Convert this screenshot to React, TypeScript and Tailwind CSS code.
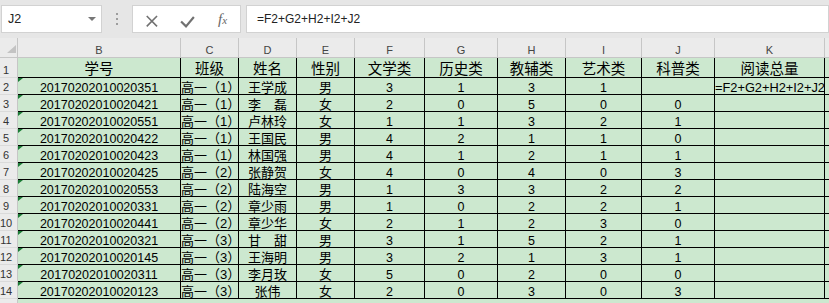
import React from "react";

type Col = { letter: string; w: string; align: string };

const cols: Col[] = [
  { letter: "B", w: "w-[163px]", align: "justify-center" },
  { letter: "C", w: "w-[58px]", align: "justify-start" },
  { letter: "D", w: "w-[58px]", align: "justify-center" },
  { letter: "E", w: "w-[58px]", align: "justify-center" },
  { letter: "F", w: "w-[70px]", align: "justify-center" },
  { letter: "G", w: "w-[73px]", align: "justify-center" },
  { letter: "H", w: "w-[68px]", align: "justify-center" },
  { letter: "I", w: "w-[76px]", align: "justify-center" },
  { letter: "J", w: "w-[73px]", align: "justify-center" },
  { letter: "K", w: "w-[110px]", align: "justify-start" },
];

const headers = ["学号", "班级", "姓名", "性别", "文学类", "历史类", "教辅类", "艺术类", "科普类", "阅读总量"];

const data: string[][] = [
  ["20170202010020351", "高一（1）", "王学成", "男", "3", "1", "3", "1", "", "=F2+G2+H2+I2+J2"],
  ["20170202010020421", "高一（1）", "李　磊", "女", "2", "0", "5", "0", "0", ""],
  ["20170202010020551", "高一（1）", "卢林玲", "女", "1", "1", "3", "2", "1", ""],
  ["20170202010020422", "高一（1）", "王国民", "男", "4", "2", "1", "1", "0", ""],
  ["20170202010020423", "高一（1）", "林国强", "男", "4", "1", "2", "1", "1", ""],
  ["20170202010020425", "高一（2）", "张静贺", "女", "4", "0", "4", "0", "3", ""],
  ["20170202010020553", "高一（2）", "陆海空", "男", "1", "3", "3", "2", "2", ""],
  ["20170202010020331", "高一（2）", "章少雨", "男", "1", "0", "2", "2", "1", ""],
  ["20170202010020441", "高一（2）", "章少华", "女", "2", "1", "2", "3", "0", ""],
  ["20170202010020321", "高一（3）", "甘　甜", "男", "3", "1", "5", "2", "1", ""],
  ["20170202010020145", "高一（3）", "王海明", "男", "3", "2", "1", "3", "1", ""],
  ["20170202010020311", "高一（3）", "李月玫", "女", "5", "0", "2", "0", "0", ""],
  ["20170202010020123", "高一（3）", "张伟", "女", "2", "0", "3", "0", "3", ""],
];

function RowHeader({ n, h }: { n: string; h: string }) {
  return (
    <div className={`${h} w-[18px] shrink-0 bg-[#ebebeb] border-r border-b border-r-[#c6c6c6] border-b-[#dadada] flex items-end`}>
      <span className="w-[12px] text-center text-[11px] leading-[12px] text-[#333] pb-[1px]">{n}</span>
    </div>
  );
}

export default function App() {
  return (
    <div className="w-[829px] h-[303px] overflow-hidden bg-[#e6e6e6] font-['Liberation_Sans','Noto_Sans_CJK_SC',sans-serif] text-black">
      {/* toolbar */}
      <div className="h-[38px] flex items-start pt-[5px]">
        <div className="ml-[1px] w-[101px] h-[28px] bg-white border border-[#d2d2d2] flex items-center pl-[6px] pr-[5px]">
          <span className="text-[12.5px] text-[#222] flex-1">J2</span>
          <div className="w-0 h-0 border-l-[4px] border-r-[4px] border-t-[4px] border-l-transparent border-r-transparent border-t-[#777] mt-[-1px]" />
        </div>
        <div className="w-[30px] h-[28px] flex flex-col items-center justify-center gap-[3px]">
          <div className="w-[2px] h-[2px] bg-[#9d9d9d]" />
          <div className="w-[2px] h-[2px] bg-[#9d9d9d]" />
          <div className="w-[2px] h-[2px] bg-[#9d9d9d]" />
        </div>
        <div className="w-[109px] h-[28px] bg-white border border-[#d2d2d2] flex items-center">
          <svg width="109" height="26" viewBox="0 0 109 26" className="block">
            <path d="M14 10 L24.5 20.5 M24.5 10 L14 20.5" stroke="#717171" strokeWidth="1.6" fill="none" />
            <path d="M49 15.5 L54 20.5 L62 11" stroke="#717171" strokeWidth="2.2" fill="none" />
          </svg>
        </div>
        <div className="ml-[-23px] w-[20px] h-[28px] flex items-center mr-[8px] relative">
          <span className="font-['Liberation_Serif',serif] italic text-[15px] text-[#666] leading-none">f</span>
          <span className="font-['Liberation_Serif',serif] italic text-[11px] text-[#666] leading-none mt-[3px]">x</span>
        </div>
        <div className="flex-1 h-[28px] bg-white border border-[#d2d2d2] flex items-center pl-[10px]">
          <span className="text-[12px] text-[#222]">=F2+G2+H2+I2+J2</span>
        </div>
      </div>

      {/* column headers */}
      <div className="flex h-[20px]">
        <div className="w-[18px] h-[20px] shrink-0 bg-[#ebebeb] border-r border-b border-[#c6c6c6] relative">
          <svg width="18" height="20" className="absolute left-0 top-0">
            <polygon points="7,15 16,15 16,7" fill="#c3c3c3" />
          </svg>
        </div>
        {cols.map((c) => (
          <div key={c.letter} className={`${c.w} shrink-0 h-[20px] bg-[#ebebeb] border-r border-b border-[#c6c6c6] flex items-end justify-center pb-[1px]`}>
            <span className="text-[11px] leading-[12px] text-[#444]">{c.letter}</span>
          </div>
        ))}
        <div className="flex-1 h-[20px] bg-[#ebebeb] border-b border-[#c6c6c6]" />
      </div>

      {/* row 1 */}
      <div className="flex h-[20px]">
        <RowHeader n="1" h="h-[20px]" />
        {cols.map((c, i) => (
          <div key={c.letter} className={`${c.w} shrink-0 h-[20px] bg-[#cce8cf] border-r border-b border-black flex items-end justify-center pb-[2px]`}>
            <span className="text-[14.5px] leading-[12px] whitespace-nowrap">{headers[i]}</span>
          </div>
        ))}
        <div className="flex-1 h-[20px] bg-[#cce8cf] border-b border-black" />
      </div>

      {/* data rows */}
      {data.map((row, r) => (
        <div key={r} className="flex h-[17px]">
          <RowHeader n={String(r + 2)} h="h-[17px]" />
          {cols.map((c, i) => {
            const v = row[i];
            const isB = i === 0;
            const isCjk = i === 1 || i === 2 || i === 3;
            return (
              <div key={c.letter} className={`${c.w} shrink-0 h-[17px] bg-[#cce8cf] border-r border-b border-black flex items-end ${c.align} relative ${i === 9 ? "z-10" : ""}`}>
                {isB && (
                  <div className="absolute left-0 top-0 w-0 h-0 border-t-[4px] border-r-[5px] border-t-[#1a7a35] border-r-transparent" />
                )}
                <span className={`${isCjk ? "text-[13px]" : i === 9 ? "text-[12.8px]" : "text-[12.5px]"} leading-[12px] whitespace-nowrap`}>{v}</span>
              </div>
            );
          })}
          <div className="flex-1 h-[17px] bg-[#cce8cf] border-b border-black" />
        </div>
      ))}

      {/* row 15 partial */}
      <div className="flex h-[17px]">
        <RowHeader n="" h="h-[17px]" />
        <div className="flex-1 h-[17px] bg-[#cce8cf]" />
      </div>
    </div>
  );
}
